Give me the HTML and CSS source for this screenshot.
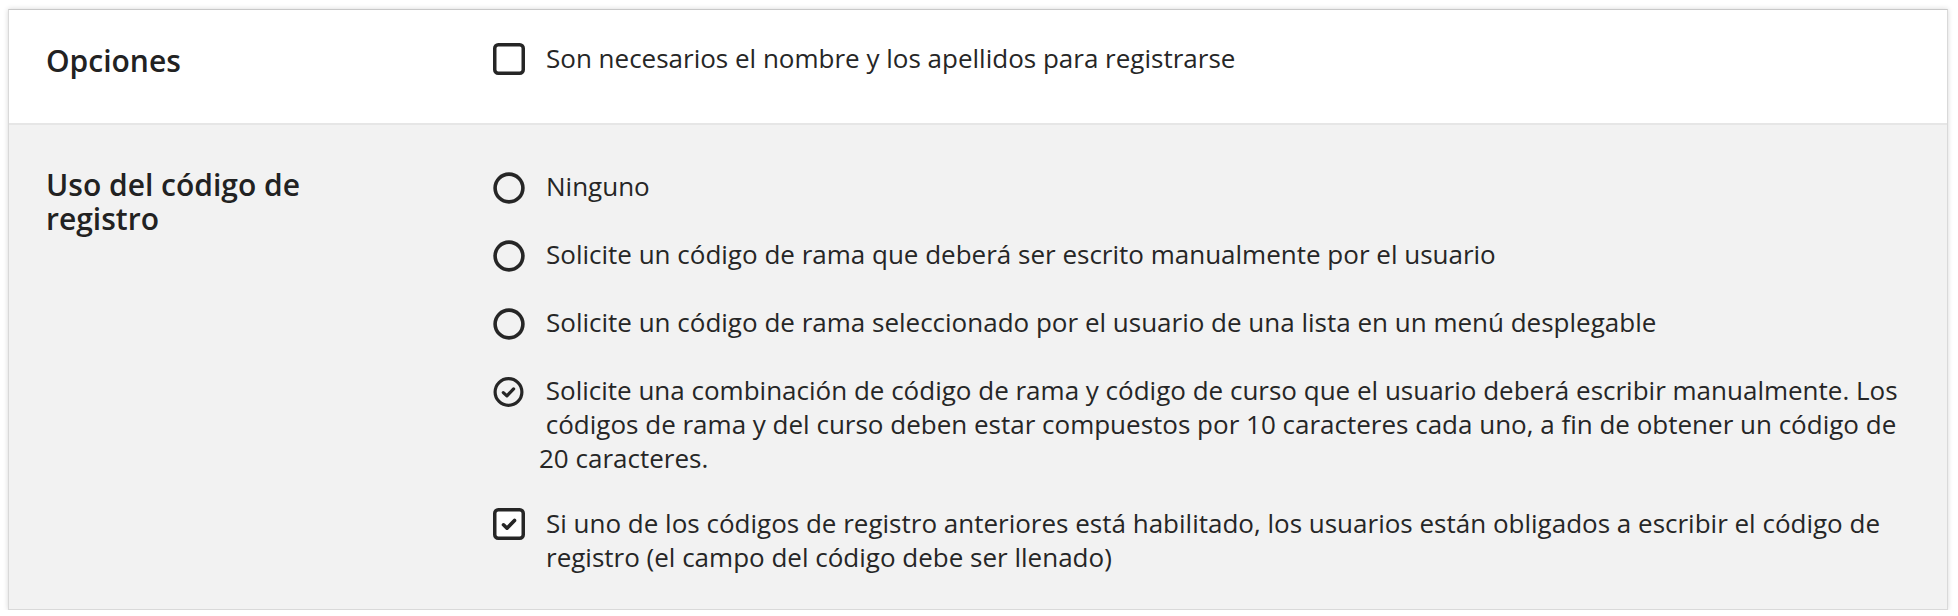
FILE: index.html
```html
<!DOCTYPE html>
<html lang="es">
<head>
<meta charset="utf-8">
<title>Opciones de registro</title>
<link rel="stylesheet" href="styles.css">
</head>
<body>
<div class="card">
  <div class="row row-top">
    <div class="label">Opciones</div>
    <div class="options">
      <label class="opt">
        <span class="icon"><svg width="32" height="32" viewBox="0 0 32 32"><rect x="1.75" y="1.75" width="28.5" height="28.5" rx="3.5" fill="#fff" stroke="#262626" stroke-width="3.5"/></svg></span>
        <span class="txt">Son necesarios el nombre y los apellidos para registrarse</span>
      </label>
    </div>
  </div>
  <div class="row row-gray">
    <div class="label">Uso del código de registro</div>
    <div class="options">
      <label class="opt">
        <span class="icon"><svg width="32" height="32" viewBox="0 0 32 32"><circle cx="16" cy="16" r="13.9" fill="none" stroke="#262626" stroke-width="3.6"/></svg></span>
        <span class="txt">Ninguno</span>
      </label>
      <label class="opt">
        <span class="icon"><svg width="32" height="32" viewBox="0 0 32 32"><circle cx="16" cy="16" r="13.9" fill="none" stroke="#262626" stroke-width="3.6"/></svg></span>
        <span class="txt">Solicite un código de rama que deberá ser escrito manualmente por el usuario</span>
      </label>
      <label class="opt">
        <span class="icon"><svg width="32" height="32" viewBox="0 0 32 32"><circle cx="16" cy="16" r="13.9" fill="none" stroke="#262626" stroke-width="3.6"/></svg></span>
        <span class="txt">Solicite un código de rama seleccionado por el usuario de una lista en un menú desplegable</span>
      </label>
      <label class="opt opt-checked">
        <span class="icon"><svg width="32" height="32" viewBox="0 0 32 32"><circle cx="15.5" cy="16" r="13.4" fill="none" stroke="#262626" stroke-width="3.2"/><path d="M10.3 16.6 L13.9 19.9 L20.6 12.9" fill="none" stroke="#262626" stroke-width="3.2" stroke-linecap="round" stroke-linejoin="round"/></svg></span>
        <span class="txt txt-tight">&nbsp;Solicite una combinación de código de rama y código de curso que el usuario deberá escribir manualmente. Los<br>&nbsp;códigos de rama y del curso deben estar compuestos por 10 caracteres cada uno, a fin de obtener un código de<br>20 caracteres.</span>
      </label>
      <label class="opt opt-last">
        <span class="icon"><svg width="32" height="32" viewBox="0 0 32 32"><rect x="1.75" y="1.75" width="28.5" height="28.5" rx="3.5" fill="#fff" stroke="#262626" stroke-width="3.5"/><path d="M10.5 16.8 L14 20.2 L21.5 12.4" fill="none" stroke="#262626" stroke-width="3.6" stroke-linecap="round" stroke-linejoin="round"/></svg></span>
        <span class="txt">Si uno de los códigos de registro anteriores está habilitado, los usuarios están obligados a escribir el código de<br>registro (el campo del código debe ser llenado)</span>
      </label>
    </div>
  </div>
</div>
</body>
</html>
```

FILE: styles.css
```css
html, body {
  margin: 0;
  padding: 0;
  background: #ffffff;
}

body {
  font-family: "Open Sans", "Liberation Sans", sans-serif;
  color: #262626;
}

.card {
  margin: 9px 10px 0 8px;
  border: 1px solid #d9d9d9;
  border-top-color: #c8c8c8;
  box-shadow: 0 0 5px rgba(0, 0, 0, 0.16);
  background: #ffffff;
}

.row {
  display: grid;
  grid-template-columns: 447px 1fr;
  padding-left: 37px;
  padding-right: 40px;
}

.row-top {
  padding-top: 30.5px;
  padding-bottom: 45px;
  background: #ffffff;
}

.row-gray {
  background: #f2f2f2;
  border-top: 2px solid #e6e6e6;
  padding-top: 44.5px;
  padding-bottom: 35px;
}

.label {
  font-size: 30px;
  line-height: 34px;
  font-weight: 600;
  color: #222222;
  max-width: 340px;
}

.row-top .label {
  padding-top: 3px;
}

.row-gray .label {
  margin-top: -1px;
}

.options {
  display: flex;
  flex-direction: column;
  gap: 33.5px;
}

.opt {
  display: flex;
  align-items: flex-start;
  font-size: 26px;
  line-height: 34px;
}

.icon {
  flex: 0 0 32px;
  width: 32px;
  height: 32px;
  margin-top: 2.5px;
}

.icon svg {
  display: block;
}

.txt {
  margin-left: 21px;
}

.txt-tight {
  margin-left: 14px;
}

.opt-last {
  margin-top: -3px;
}
```
